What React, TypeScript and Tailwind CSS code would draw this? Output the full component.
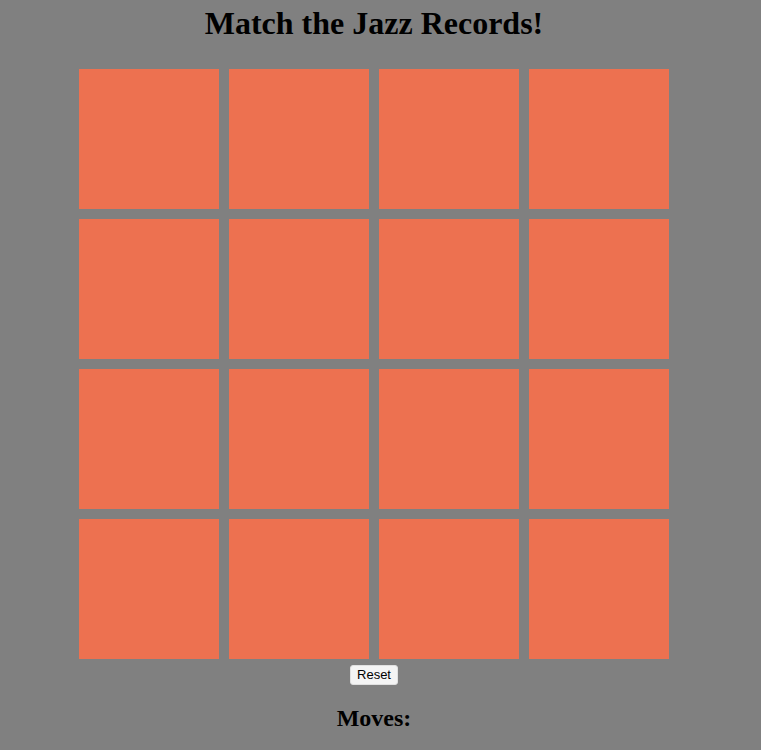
const tiles = Array.from({ length: 16 }, (_, i) => i);

const App = () => {
  return (
    <div className="min-h-screen w-full bg-[#808080]">
      <div className="w-[748px] flex flex-col items-center font-['Liberation_Serif',serif] text-black">
        <h1 className="mt-[5px] text-[32px] leading-[36px] font-bold">
          Match the Jazz Records!
        </h1>
        <div className="mt-[28px] grid grid-cols-4 gap-[10px]">
          {tiles.map((t) => (
            <div key={t} className="size-[140px] bg-[#ed7150] cursor-pointer" />
          ))}
        </div>
        <button className="mt-[6px] h-[20px] px-[6px] rounded-[3px] bg-[#f4f4f4] border border-[#e0e0e0] text-[13px] leading-[16px] font-['Liberation_Sans',Arial,sans-serif] text-black">
          Reset
        </button>
        <h2 className="mt-[19px] text-[24px] leading-[28px] font-bold">Moves:</h2>
      </div>
    </div>
  );
};

export default App;
